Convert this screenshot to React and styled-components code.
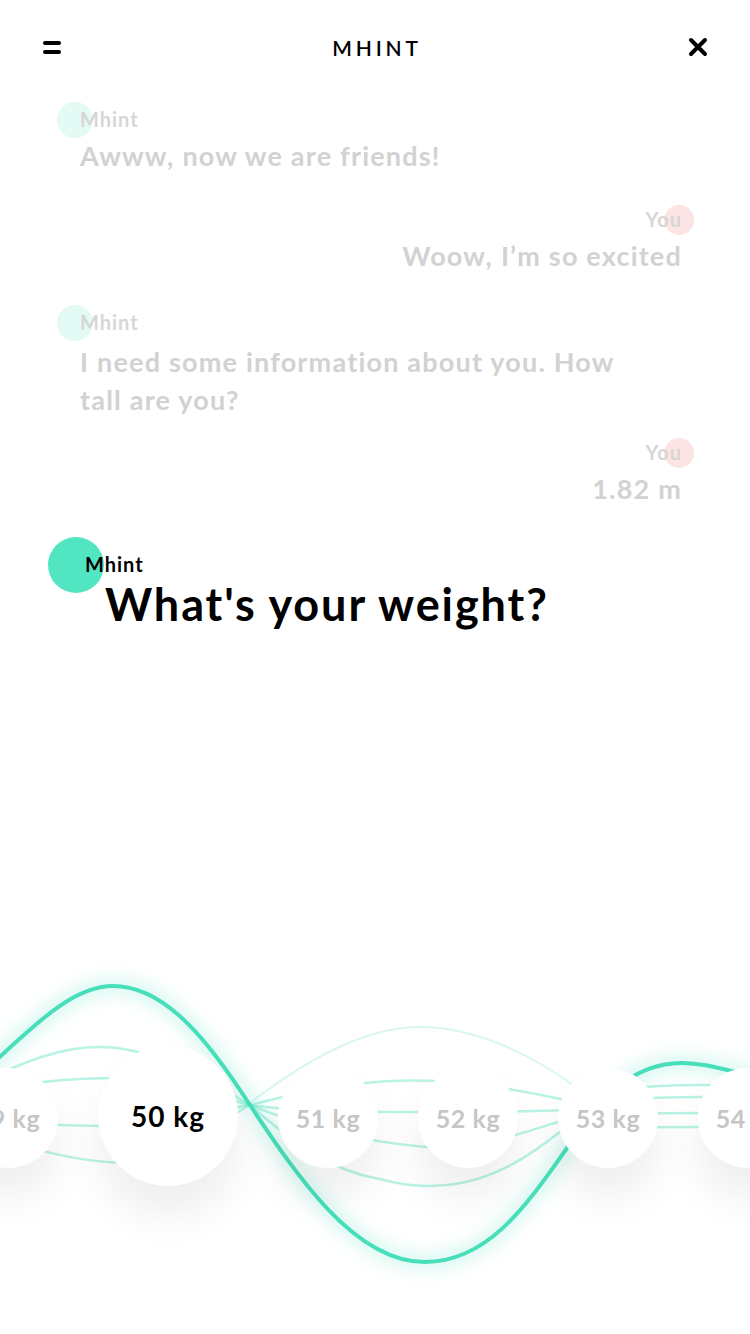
import styled, { createGlobalStyle } from 'styled-components'

//STYLES
const GlobalStyle = createGlobalStyle`
  html, body {
    margin: 0;
    padding: 0;
    background: #ffffff;
  }
  body {
    font-family: Lato, 'Open Sans', sans-serif;
  }
`

const Page = styled.div`
  width: 750px;
  height: 1334px;
  overflow: hidden;
  display: flex;
  flex-direction: column;
  background: #ffffff;
`

const Header = styled.header`
  height: 94px;
  display: flex;
  align-items: center;
  justify-content: space-between;
  padding: 0 42px;
  flex-shrink: 0;
`

const IconButton = styled.button`
  width: 20px;
  height: 20px;
  padding: 0;
  border: none;
  background: none;
  display: flex;
  align-items: center;
  justify-content: center;
  cursor: pointer;
`

const Title = styled.h1`
  margin: 0 0 0 4px;
  font-size: 21px;
  font-weight: 600;
  letter-spacing: 3.8px;
  color: #000;
`

const Chat = styled.section`
  display: flex;
  flex-direction: column;
  padding: 13px 68px 0 80px;
`

const Message = styled.div`
  display: flex;
  flex-direction: column;
  align-items: ${(p) => (p.$side === 'right' ? 'flex-end' : 'flex-start')};
  margin-top: ${(p) => p.$top || 0}px;
`

const Label = styled.div`
  position: relative;
  font-size: 20px;
  line-height: 24px;
  font-weight: 700;
  letter-spacing: 1px;
  color: ${(p) => (p.$active ? '#000' : '#d6d6d6')};
  margin-left: ${(p) => (p.$active ? 5 : 0)}px;
`

const LabelText = styled.span`
  position: relative;
  z-index: 1;
`

const Avatar = styled.span`
  position: absolute;
  top: 50%;
  border-radius: 50%;
  width: ${(p) => p.$size}px;
  height: ${(p) => p.$size}px;
  margin-top: ${(p) => -p.$size / 2 + 1}px;
  background: ${(p) => p.$color};
  ${(p) => (p.$side === 'right' ? 'right: -12px;' : `left: ${p.$left}px;`)}
`

const Text = styled.p`
  margin: ${(p) => p.$gap || 6}px 0 0;
  font-size: 27px;
  line-height: 38px;
  font-weight: 700;
  letter-spacing: 1.2px;
  color: #d2d2d2;
  text-align: ${(p) => (p.$side === 'right' ? 'right' : 'left')};
  max-width: 560px;
`

const Question = styled.h2`
  margin: 0 0 0 25px;
  font-size: 45px;
  line-height: 56px;
  font-weight: 700;
  letter-spacing: 1.9px;
  color: #000;
`

const Wheel = styled.section`
  position: relative;
  margin-top: auto;
  height: 374px;
  flex-shrink: 0;
`

const Waves = styled.svg`
  position: absolute;
  left: 0;
  top: 0;
  pointer-events: none;
`

const BubbleRow = styled.div`
  position: relative;
  display: flex;
  align-items: center;
  gap: 40px;
  margin-left: -42px;
  padding-top: 88px;
  height: 140px;
`

const Bubble = styled.div`
  flex-shrink: 0;
  width: ${(p) => (p.$active ? 140 : 100)}px;
  height: ${(p) => (p.$active ? 140 : 100)}px;
  margin-top: ${(p) => (p.$active ? -4 : 0)}px;
  border-radius: 50%;
  background: #ffffff;
  box-shadow: 0 28px 44px rgba(0, 0, 0, 0.07);
  display: flex;
  align-items: center;
  justify-content: center;
  white-space: nowrap;
  font-size: ${(p) => (p.$active ? 28 : 25)}px;
  font-weight: 700;
  letter-spacing: ${(p) => (p.$active ? 1 : 0.6)}px;
  color: ${(p) => (p.$active ? '#000' : '#c6c6c6')};
`

//DATA
const weights = [49, 50, 51, 52, 53, 54]

const lightWaves = [
  'M -20 1082 C 30 1060, 60 1047, 100 1047 C 150 1047, 200 1075, 250 1105 C 290 1095, 330 1085, 390 1081 C 450 1078, 510 1088, 565 1100 C 610 1090, 640 1085, 700 1085 L 760 1086',
  'M -20 1092 C 20 1084, 60 1078, 120 1078 C 180 1078, 220 1098, 250 1105 C 300 1112, 340 1112, 400 1112 C 470 1112, 520 1112, 565 1110 C 610 1100, 640 1097, 700 1097 L 760 1097',
  'M -20 1122 C 30 1124, 70 1126, 110 1126 C 160 1126, 210 1112, 250 1105 C 300 1125, 350 1140, 425 1147 C 480 1150, 530 1130, 565 1120 C 610 1113, 640 1113, 700 1113 L 760 1113',
  'M 30 1148 C 60 1155, 90 1163, 130 1163 C 180 1163, 220 1120, 250 1105 C 290 1140, 330 1170, 375 1178 C 400 1184, 410 1186, 430 1186 C 490 1186, 530 1155, 565 1128 C 610 1127, 640 1127, 700 1127 L 760 1127',
]

const mainWave =
  'M -20 1075 C 30 1030, 70 986, 113 986 C 160 986, 200 1030, 240 1090 C 290 1165, 350 1262, 425 1262 C 490 1262, 530 1200, 567 1148 C 600 1100, 630 1063, 682 1063 C 705 1063, 725 1070, 760 1078'

//LOGIC
const MenuIcon = () => (
  <svg width="20" height="16" viewBox="0 0 20 16">
    <rect x="1" y="2" width="18" height="4" rx="2" fill="#000" />
    <rect x="1" y="11" width="18" height="4" rx="2" fill="#000" />
  </svg>
)

const CloseIcon = () => (
  <svg width="20" height="20" viewBox="0 0 20 20">
    <path d="M3 3 L17 17 M17 3 L3 17" stroke="#000" strokeWidth="4" strokeLinecap="round" />
  </svg>
)

const ChatMessage = ({ side, author, top, gap, children }) => {
  const right = side === 'right'
  return (
    <Message $side={side} $top={top}>
      <Label>
        <Avatar
          $side={side}
          $size={right ? 30 : 36}
          $left={-23}
          $color={right ? '#fde4e4' : '#e4faf4'}
        />
        <LabelText>{author}</LabelText>
      </Label>
      <Text $side={side} $gap={gap}>
        {children}
      </Text>
    </Message>
  )
}

const App = () => {
  return (
    <Page>
      <GlobalStyle />
      <Header>
        <IconButton aria-label="menu">
          <MenuIcon />
        </IconButton>
        <Title>MHINT</Title>
        <IconButton aria-label="close">
          <CloseIcon />
        </IconButton>
      </Header>

      <Chat>
        <ChatMessage author="Mhint">Awww, now we are friends!</ChatMessage>
        <ChatMessage side="right" author="You" top={32}>
          Woow, I’m so excited
        </ChatMessage>
        <ChatMessage author="Mhint" top={35} gap={9}>
          I need some information about you. How tall are you?
        </ChatMessage>
        <ChatMessage side="right" author="You" top={21}>
          1.82 m
        </ChatMessage>
        <Message $top={44}>
          <Label $active>
            <Avatar $size={56} $left={-37} $color="#52e5c2" />
            <LabelText>Mhint</LabelText>
          </Label>
          <Question>What's your weight?</Question>
        </Message>
      </Chat>

      <Wheel>
        <Waves width="750" height="374" viewBox="0 960 750 374">
          <defs>
            <filter id="glow" x="-20%" y="-20%" width="140%" height="140%">
              <feGaussianBlur stdDeviation="8" />
            </filter>
          </defs>
          <path
            d="M 250 1103 C 300 1065, 360 1027, 420 1027 C 480 1027, 540 1060, 580 1090"
            fill="none"
            stroke="#d9f7ef"
            strokeWidth="2"
          />
          {lightWaves.map((d, i) => (
            <path
              key={i}
              d={d}
              fill="none"
              stroke="#4de0bd"
              strokeOpacity="0.4"
              strokeWidth="2.5"
            />
          ))}
          <path
            d={mainWave}
            fill="none"
            stroke="#4de0bd"
            strokeOpacity="0.22"
            strokeWidth="16"
            filter="url(#glow)"
          />
          <path d={mainWave} fill="none" stroke="#46dfba" strokeWidth="4" />
        </Waves>
        <BubbleRow>
          {weights.map((w) => (
            <Bubble key={w} $active={w === 50}>
              {w} kg
            </Bubble>
          ))}
        </BubbleRow>
      </Wheel>
    </Page>
  )
}

export default App
